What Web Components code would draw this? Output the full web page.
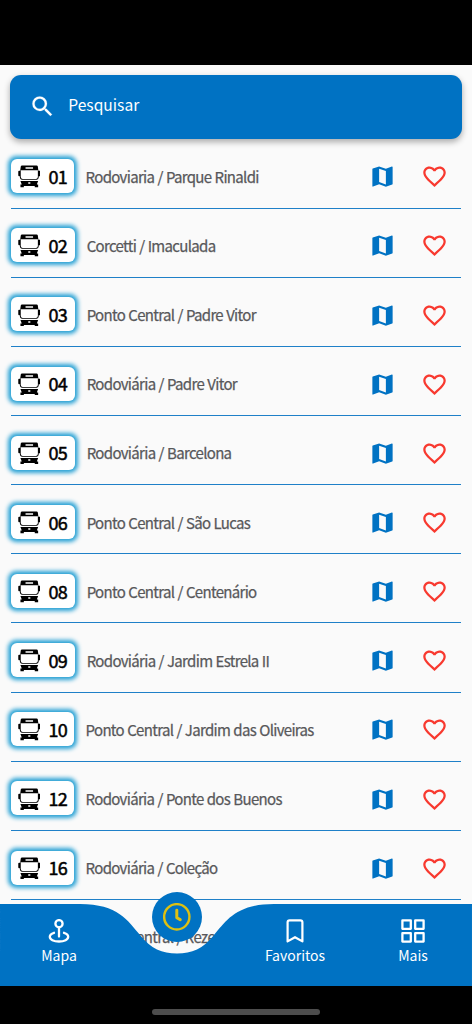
<!DOCTYPE html>
<html lang="pt-BR">
<head>
<meta charset="utf-8">
<title>Linhas</title>
<style>
html,body{margin:0;height:100%;background:#000}
body{font-family:"Noto Sans CJK SC","Noto Sans",sans-serif;overflow:hidden}
</style>
</head>
<body>
<bus-app></bus-app>
<script>
const define=(name,html,setup)=>customElements.define(name,class extends HTMLElement{
  constructor(){
    super();
    const t=document.createElement('template');
    t.innerHTML=html;
    this.attachShadow({mode:'open'}).append(t.content.cloneNode(true));
  }
  connectedCallback(){ if(setup) setup(this,this.shadowRoot); }
});

const ICONS={
  search:'<path fill="currentColor" stroke="currentColor" stroke-width=".15" d="M15.5 14h-.79l-.28-.27A6.471 6.471 0 0 0 16 9.5 6.5 6.5 0 1 0 9.5 16c1.61 0 3.09-.59 4.23-1.57l.27.28v.79l5 4.99L20.49 19l-4.99-5zm-6 0C7.01 14 5 11.99 5 9.5S7.01 5 9.5 5 14 7.01 14 9.5 11.99 14 9.5 14z"/>',
  map:'<path fill="currentColor" d="M20.5 3l-.16.03L15 5.1 9 3 3.36 4.9c-.21.07-.36.25-.36.48V20.5c0 .28.22.5.5.5l.16-.03L9 18.9l6 2.1 5.64-1.9c.21-.07.36-.25.36-.48V3.5c0-.28-.22-.5-.5-.5zM15 19l-6-2.11V5l6 2.11V19z"/>',
  heart:'<path fill="currentColor" d="M16.5 3c-1.74 0-3.41.81-4.5 2.09C10.91 3.81 9.24 3 7.5 3 4.42 3 2 5.42 2 8.5c0 3.78 3.4 6.86 8.55 11.54L12 21.35l1.45-1.32C18.6 15.36 22 12.28 22 8.5 22 5.42 19.58 3 16.5 3zm-4.4 15.55l-.1.1-.1-.1C7.14 14.24 4 11.39 4 8.5 4 6.5 5.5 5 7.5 5c1.54 0 3.04.99 3.57 2.36h1.87C13.46 5.99 14.96 5 16.5 5c2 0 3.5 1.5 3.5 3.5 0 2.89-3.14 5.74-7.9 10.05z"/>',
  bus:'<path fill="currentColor" fill-rule="evenodd" d="M4.2 .4H19.8Q20.8 .4 21 1.400L21.600 5.600V6H22.800Q23.700 6 23.700 7V11Q23.700 12 22.800 12H22V13.400Q21.800 15.600 20 15.800H4Q2.200 15.600 2 13.400V12H1.200Q.3 12 .3 11V7Q.3 6 1.200 6H2.400V5.600L3 1.400Q3.200 .4 4.200 .4ZM8 2.300V3.900H16V2.300ZM2.900 5.600V12.800Q3.200 14.800 5 14.800H19Q20.800 14.800 21.100 12.800V5.600ZM2.600 16.900H21.400L20 20.800H21.400V23.600H17.800V22.300H6.200V23.600H2.600V20.800H4ZM10.900 18.200V19.800H13.100V18.200Z"/>',
  pin:'<g fill="none" stroke="currentColor" stroke-width="2.3"><circle cx="12" cy="4.700" r="3.600"/><path stroke-linecap="round" d="M12 8.300v9.200M7 13.800c-2.500.8-4.200 2.200-4.200 4 0 2.700 3.900 4.700 9.200 4.700s9.200-2 9.200-4.700c0-1.800-1.700-3.200-4.200-4"/></g>',
  clock:'<g fill="none" stroke="currentColor" stroke-width="2.1"><circle cx="12" cy="12" r="11"/><path stroke-width="2.6" stroke-linecap="round" stroke-linejoin="round" d="M12 6.2v6.600l3 1.700"/></g>',
  bookmark:'<path fill="none" stroke="currentColor" stroke-width="2.2" stroke-linejoin="round" d="M4.600 22.400V3.300Q4.600 1.300 6.600 1.300H17.400Q19.400 1.300 19.400 3.300V22.400L12 18.200Z"/>',
  grid:'<path fill="none" stroke="currentColor" stroke-width="2.3" stroke-linejoin="round" d="M1.400 1.400h8.400v8.400H1.400zM14.200 1.400h8.400v8.400h-8.400zM1.400 14.200h8.400v8.400H1.400zM14.200 14.200h8.400v8.400h-8.400z"/>'
};

define('ui-icon',`<style>:host{display:block;width:27px;height:27px;flex:none}svg{display:block;width:100%;height:100%}</style><svg viewBox="0 0 24 24"></svg>`,
  (el,root)=>{root.querySelector('svg').innerHTML=ICONS[el.getAttribute('name')];});

define('search-bar',`<style>
:host{display:flex;align-items:center;box-sizing:border-box;margin:0 10.3px;height:63.7px;padding-left:18.7px;border-radius:11px;background:#0072c3;color:#fff;box-shadow:0 3px 6px rgba(0,0,0,.32)}
span{margin-left:12.300px;font-size:15.6px;line-height:24px;margin-bottom:6px}
</style><ui-icon name="search"></ui-icon><span><slot></slot></span>`);

define('line-badge',`<style>
:host{display:flex;align-items:center;box-sizing:border-box;height:34px;width:var(--w,64.3px);padding-left:6.500px;border-radius:6px;background:#fff;color:#000;box-shadow:0 0 4px 2.2px #27a1d4}
ui-icon{width:22.600px;height:22.600px;margin-top:.8px}
span{margin-left:8.300px;font-size:18px;line-height:24px;letter-spacing:-.7px;-webkit-text-stroke:.5px #000;margin-bottom:.6px}
</style><ui-icon name="bus"></ui-icon><span><slot></slot></span>`);

define('bus-line',`<style>
:host{display:flex;align-items:center;box-sizing:border-box;height:69.15px;flex:none;margin:0 11.2px;padding-bottom:.6px;border-bottom:1.2px solid #1f80c8}
line-badge{margin-top:5.800px}
.name{flex:1;margin-left:11.2px;font-size:15px;line-height:24px;letter-spacing:-.68px;word-spacing:.5px;color:#58585a;-webkit-text-stroke:.25px #58585a;white-space:nowrap;margin-top:7.300px}
.map{color:#0072c3;margin:7.200px 25.4px 0 0}
.heart{color:#f8392f;margin:7.200px 12.700px 0 0}
</style><line-badge><slot name="number"></slot></line-badge><div class="name"><slot></slot></div>
<ui-icon class="map" name="map"></ui-icon><ui-icon class="heart" name="heart"></ui-icon>`);

define('nav-item',`<style>
:host{display:flex;flex-direction:column;align-items:center;color:#fff;padding-top:15px}
ui-icon{width:24px;height:24px}
span{font-size:14px;line-height:22px;margin-top:.5px}
</style><ui-icon></ui-icon><span><slot></slot></span>`,
  (el,root)=>{root.querySelector('ui-icon').shadowRoot.querySelector('svg').innerHTML=ICONS[el.getAttribute('icon')];});

define('nav-bar',`<style>
:host{display:block;position:absolute;left:0;right:0;bottom:0;height:82.4px}
.shape{position:absolute;inset:0;width:100%;height:100%;display:block}
.items{position:relative;display:grid;grid-template-columns:repeat(4,1fr)}
.active{justify-self:center;display:grid;place-items:center;width:50.4px;height:50.4px;margin-top:-12px;border-radius:50%;background:#0072c3;color:#ddc011}
.active ui-icon{width:27.600px;height:27.600px}
</style>
<svg class="shape" viewBox="0 0 472 82.4"><path fill="#0072c3" d="M0 0H80C118 0 128 17 140 31C151 45 162 49.4 177 49.4C192 49.4 203 45 214 31C226 17 236 0 274 0H472V82.4H0Z"/></svg>
<div class="items">
<nav-item icon="pin">Mapa</nav-item>
<div class="active"><ui-icon name="clock"></ui-icon></div>
<nav-item icon="bookmark">Favoritos</nav-item>
<nav-item icon="grid">Mais</nav-item>
</div>`);

define('bus-app',`<style>
:host{display:flex;flex-direction:column;height:1024px;width:472px;background:#000}
main{position:relative;display:flex;flex-direction:column;height:921.4px;margin-top:65px;padding-top:10px;box-sizing:border-box;background:#fafafa;overflow:hidden}
.list{display:flex;flex-direction:column;margin-top:.8px}
.home{width:168.5px;height:5.5px;border-radius:3px;background:#4d4d4d;margin:23px auto 0}
</style>
<main><search-bar>Pesquisar</search-bar><div class="list"></div><nav-bar></nav-bar></main><div class="home"></div>`,
  (el,root)=>{
    const lines=[['01','Rodoviaria / Parque Rinaldi'],['02','Corcetti / Imaculada'],['03','Ponto Central / Padre Vitor'],['04','Rodoviária / Padre Vitor'],['05','Rodoviária / Barcelona'],['06','Ponto Central / São Lucas'],['08','Ponto Central / Centenário'],['09','Rodoviária / Jardim Estrela II'],['10','Ponto Central / Jardim das Oliveiras'],['12','Rodoviária / Ponte dos Buenos'],['16','Rodoviária / Coleção'],['','Ponto Central / Rezende']];
    const list=root.querySelector('.list');
    for(const [n,name] of lines){
      const row=document.createElement('bus-line');
      if(!n||n.includes('1')) row.style.setProperty('--w','63.2px');
      row.innerHTML=`<span slot="number">${n}</span>${name}`;
      list.append(row);
    }
  });
</script>
</body>
</html>
